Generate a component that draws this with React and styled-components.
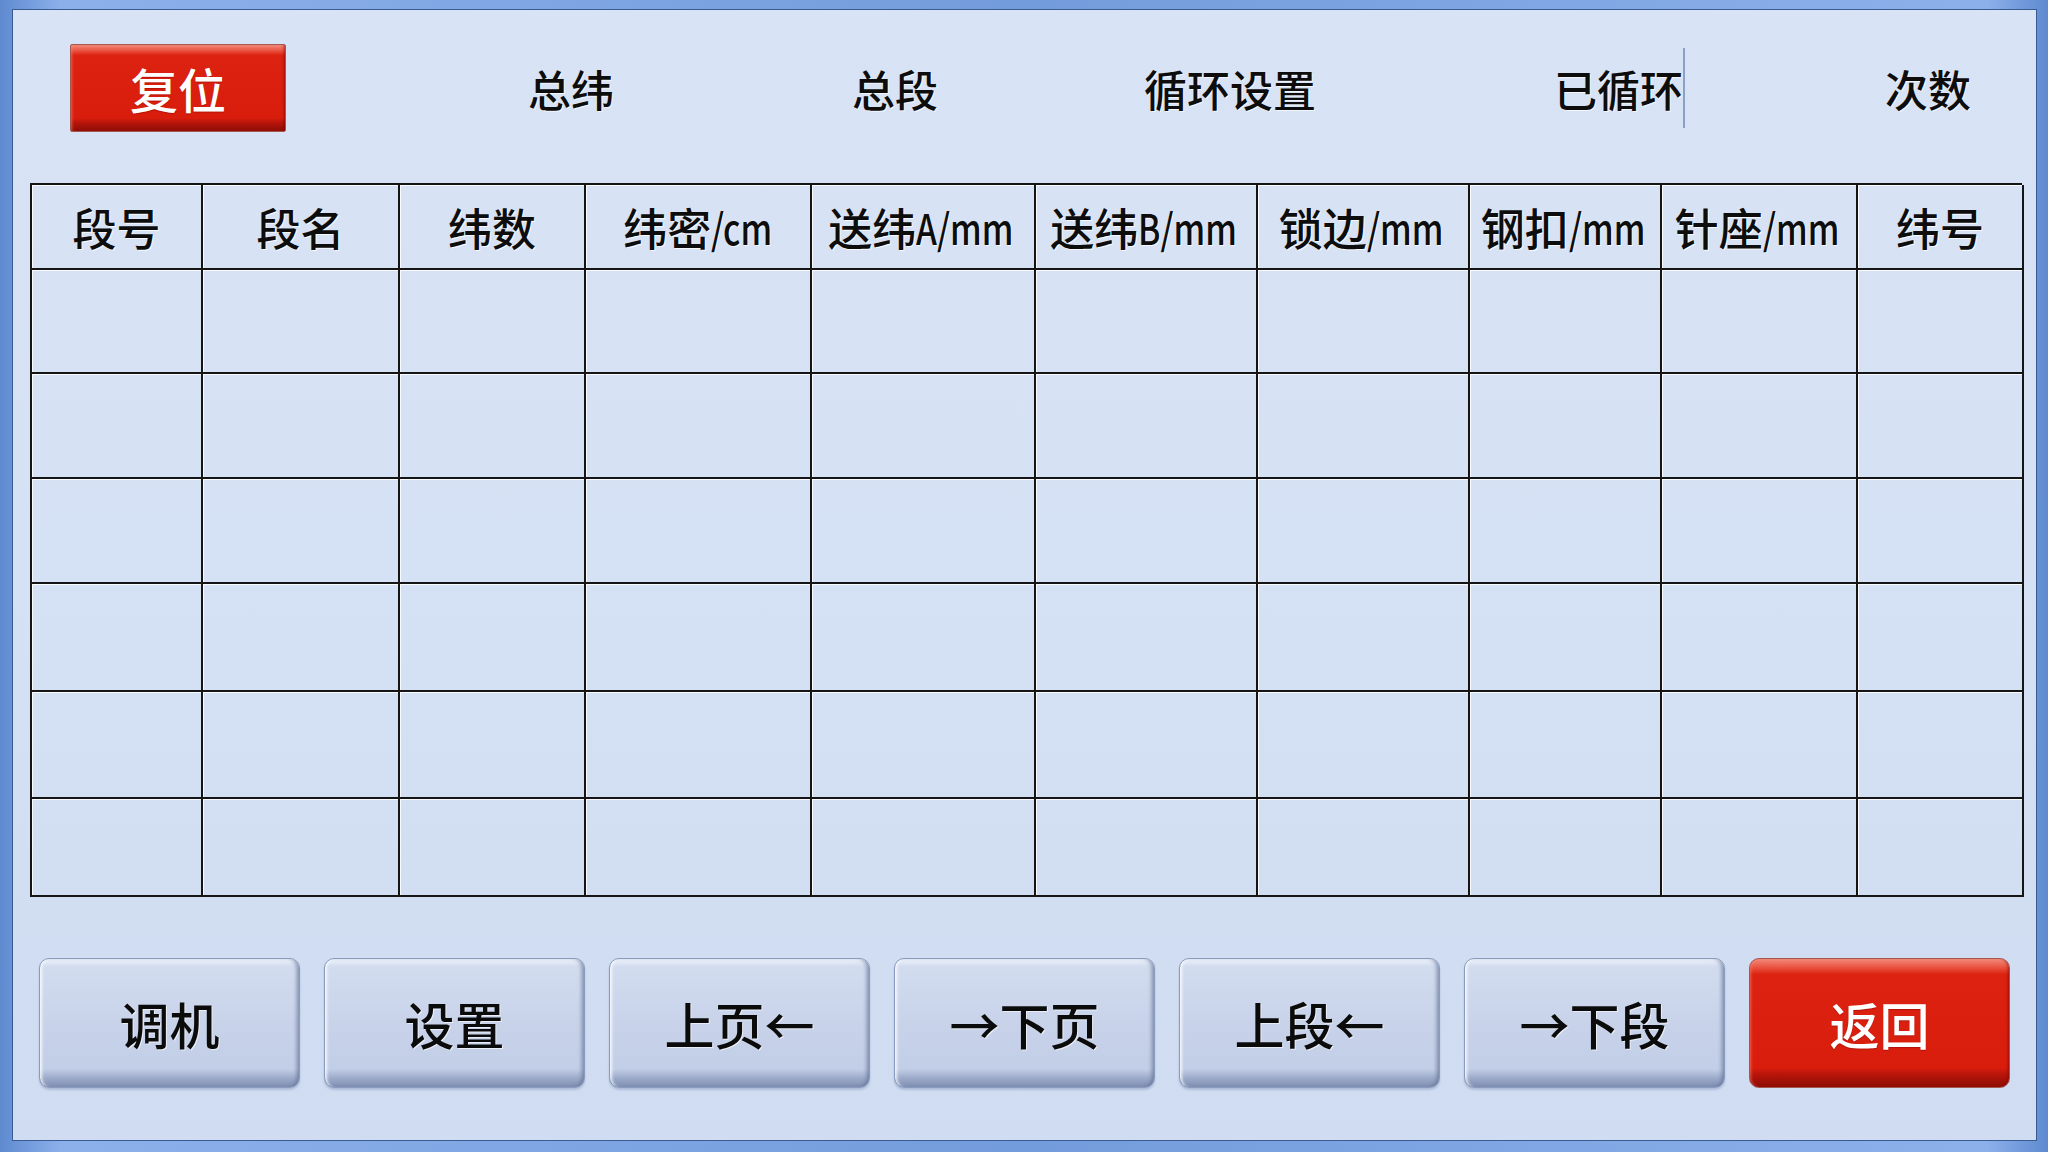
import React from "react";
import styled, { createGlobalStyle } from "styled-components";

const Global = createGlobalStyle`
  html, body { margin: 0; padding: 0; }
  body { width: 2048px; height: 1152px; overflow: hidden; font-family: "Noto Sans CJK SC", "Noto Sans", sans-serif; }
  * { box-sizing: border-box; }
`;

const Frame = styled.div`
  width: 2048px;
  height: 1152px;
  padding: 9px 11px 11px 12px;
  background: linear-gradient(90deg, #5f8ad0 0%, #8cb0ea 3%, #739cdc 50%, #8cb0ea 97%, #5f8ad0 100%);
`;

const Panel = styled.div`
  width: 100%;
  height: 100%;
  border: 1px solid #3a5a92;
  background: linear-gradient(180deg, #d8e3f5 0%, #d5e1f4 50%, #cfdcf1 100%);
  display: flex;
  flex-direction: column;
`;

const TopBar = styled.div`
  display: grid;
  grid-template-columns: 216px 114px 342px 306px 364px 271px 2px 135px 216px;
  align-items: center;
  margin: 34px 0 0 57px;
  height: 88px;
`;

const RedButton = styled.div`
  width: ${(p) => p.$w}px;
  height: ${(p) => p.$h}px;
  border-radius: ${(p) => p.$r}px;
  display: flex;
  align-items: center;
  justify-content: center;
  color: #fff;
  font-size: ${(p) => p.$fs}px;
  font-weight: 500;
  border: 1px solid #a3574f;
  background: linear-gradient(
    180deg,
    #f38a7b 0%,
    #e94f3c 7%,
    #dc2210 12%,
    #d91d0d 85%,
    #b8150a 90%,
    #8e0c05 100%
  );
  box-shadow: inset 3px 0 3px -2px rgba(255, 140, 120, 0.6), inset -3px 0 3px -2px rgba(120, 0, 0, 0.6);
  text-shadow: 0 1px 1px rgba(120, 0, 0, 0.4);
`;

const Label = styled.div`
  font-size: 43px;
  font-weight: 500;
  color: #0d0d0d;
  text-align: ${(p) => (p.$right ? "right" : "center")};
  white-space: nowrap;
  line-height: 1;
  text-shadow: 1px 1px 0 rgba(255, 255, 255, 0.7);
`;

const Divider = styled.div`
  width: 2px;
  height: 80px;
  background: #8c9fc6;
`;

const Table = styled.div`
  margin: 51px 0 0 17px;
  width: 1992px;
  display: grid;
  grid-template-columns: 171px 197px 186px 226px 224px 222px 212px 192px 196px 166px;
  grid-template-rows: 85px 104px 105px 105px 108px 107px 98px;
  border-top: 2px solid #151515;
  border-left: 2px solid #151515;
`;

const Cell = styled.div`
  border-right: 2px solid #151515;
  border-bottom: 2px solid #151515;
  box-shadow: inset 1px 1px 0 rgba(255, 255, 255, 0.85);
  display: flex;
  align-items: center;
  justify-content: center;
  font-size: 44px;
  font-weight: 500;
  color: #0d0d0d;
  white-space: nowrap;
  text-shadow: 1px 1px 0 rgba(255, 255, 255, 0.8);
`;

const Unit = styled.span`
  display: inline-block;
  font-size: 42px;
  transform: scaleX(0.8);
  transform-origin: left center;
  margin-right: ${(p) => p.$mr}px;
`;

const BottomBar = styled.div`
  display: grid;
  grid-template-columns: repeat(7, 261px);
  column-gap: 24px;
  margin: 61px 0 0 26px;
`;

const Key = styled.div`
  height: 130px;
  border-radius: 10px;
  display: flex;
  align-items: center;
  justify-content: center;
  font-size: 50px;
  font-weight: 500;
  color: #0b0b0b;
  border: 1px solid #8a9bbf;
  background: linear-gradient(180deg, #eef3fb 0%, #d2dcef 6%, #c8d3ea 50%, #c2cee7 86%, #9dabca 93%, #7f8fb2 100%);
  box-shadow: inset 4px 0 3px -2px rgba(255, 255, 255, 0.8), inset -4px 0 4px -2px rgba(90, 105, 140, 0.7), 0 2px 2px rgba(120, 140, 180, 0.4);
  text-shadow: 1px 1px 0 rgba(255, 255, 255, 0.6);
  white-space: nowrap;
`;

const headers = [
  { t: "段号" },
  { t: "段名" },
  { t: "纬数" },
  { t: "纬密", u: "/cm" },
  { t: "送纬", u: "A/mm" },
  { t: "送纬", u: "B/mm" },
  { t: "锁边", u: "/mm" },
  { t: "钢扣", u: "/mm" },
  { t: "针座", u: "/mm" },
  { t: "纬号" },
];

const keys = ["调机", "设置", "上页←", "→下页", "上段←", "→下段"];

function HeaderCell({ t, u }) {
  if (!u) return <Cell>{t}</Cell>;
  const w = u.length * 25;
  return (
    <Cell>
      {t}
      <Unit $mr={-Math.round(w * 0.2)}>{u}</Unit>
    </Cell>
  );
}

export default function App() {
  const rows = Array.from({ length: 6 });
  return (
    <>
      <Global />
      <Frame>
        <Panel>
          <TopBar>
            <RedButton $w={216} $h={88} $r={2} $fs={48}>复位</RedButton>
            <div />
            <Label>总纬</Label>
            <Label>总段</Label>
            <Label>循环设置</Label>
            <Label $right>已循环</Label>
            <Divider />
            <div />
            <Label>次数</Label>
          </TopBar>
          <Table>
            {headers.map((h, i) => (
              <HeaderCell key={i} {...h} />
            ))}
            {rows.map((_, r) =>
              headers.map((_, c) => <Cell key={`${r}-${c}`} />)
            )}
          </Table>
          <BottomBar>
            {keys.map((k) => (
              <Key key={k}>{k}</Key>
            ))}
            <RedButton $w={261} $h={130} $r={10} $fs={50}>返回</RedButton>
          </BottomBar>
        </Panel>
      </Frame>
    </>
  );
}
